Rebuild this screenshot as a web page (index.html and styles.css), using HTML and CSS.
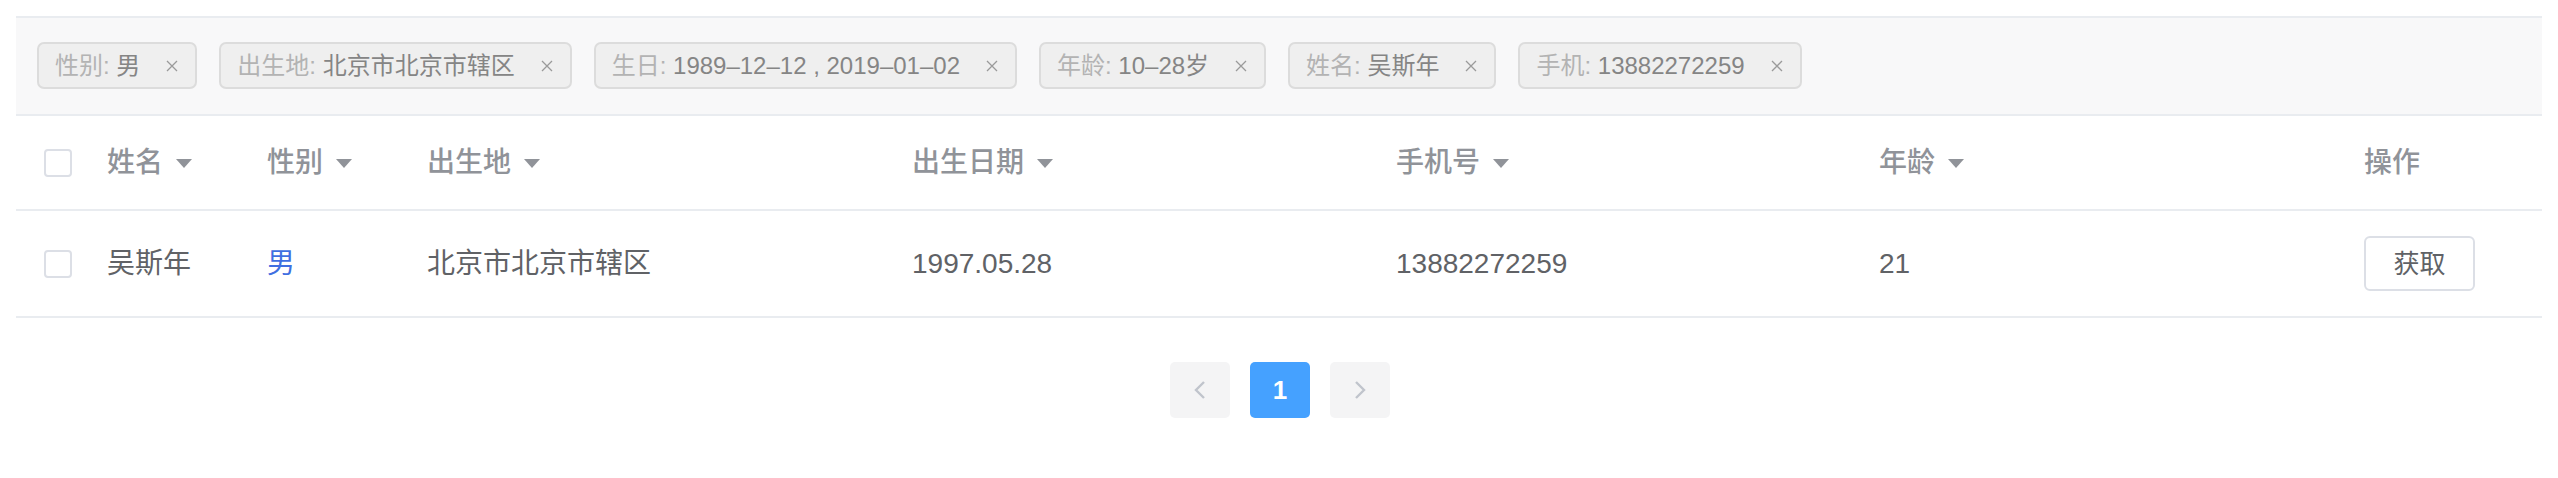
FILE: index.html
```html
<!DOCTYPE html>
<html lang="zh-CN">
<head>
<meta charset="utf-8">
<title>筛选表格</title>
<link rel="stylesheet" href="styles.css">
</head>
<body>
<div class="page">
  <div class="filter-bar">
    <span class="tag"><span class="tag-label">性别: </span><span class="tag-value">男</span><svg class="tag-close" viewBox="0 0 12 12"><path d="M1 1L11 11M11 1L1 11"/></svg></span>
    <span class="tag"><span class="tag-label">出生地: </span><span class="tag-value">北京市北京市辖区</span><svg class="tag-close" viewBox="0 0 12 12"><path d="M1 1L11 11M11 1L1 11"/></svg></span>
    <span class="tag"><span class="tag-label">生日: </span><span class="tag-value">1989–12–12 , 2019–01–02</span><svg class="tag-close" viewBox="0 0 12 12"><path d="M1 1L11 11M11 1L1 11"/></svg></span>
    <span class="tag"><span class="tag-label">年龄: </span><span class="tag-value">10–28岁</span><svg class="tag-close" viewBox="0 0 12 12"><path d="M1 1L11 11M11 1L1 11"/></svg></span>
    <span class="tag"><span class="tag-label">姓名: </span><span class="tag-value">吴斯年</span><svg class="tag-close" viewBox="0 0 12 12"><path d="M1 1L11 11M11 1L1 11"/></svg></span>
    <span class="tag"><span class="tag-label">手机: </span><span class="tag-value">13882272259</span><svg class="tag-close" viewBox="0 0 12 12"><path d="M1 1L11 11M11 1L1 11"/></svg></span>
  </div>

  <div class="table">
    <div class="row head">
      <div class="cell"><span class="checkbox"></span></div>
      <div class="cell">姓名<i class="sort"></i></div>
      <div class="cell">性别<i class="sort"></i></div>
      <div class="cell">出生地<i class="sort"></i></div>
      <div class="cell">出生日期<i class="sort"></i></div>
      <div class="cell">手机号<i class="sort"></i></div>
      <div class="cell">年龄<i class="sort"></i></div>
      <div class="cell">操作</div>
    </div>
    <div class="row body">
      <div class="cell"><span class="checkbox"></span></div>
      <div class="cell">吴斯年</div>
      <div class="cell male">男</div>
      <div class="cell">北京市北京市辖区</div>
      <div class="cell">1997.05.28</div>
      <div class="cell">13882272259</div>
      <div class="cell">21</div>
      <div class="cell"><button class="btn">获取</button></div>
    </div>
  </div>

  <div class="pager">
    <span class="pg-btn"><svg viewBox="0 0 12 20"><path d="M10 2L2 10L10 18"/></svg></span>
    <span class="pg-btn active">1</span>
    <span class="pg-btn"><svg viewBox="0 0 12 20"><path d="M2 2L10 10L2 18"/></svg></span>
  </div>
</div>
</body>
</html>
```
FILE: styles.css
```css
html, body {
  margin: 0;
  padding: 0;
  background: #ffffff;
}

body {
  font-family: "Liberation Sans", "Noto Sans CJK SC", sans-serif;
  color: #606266;
}

.page {
  padding: 16px;
}

.filter-bar {
  display: flex;
  flex-wrap: wrap;
  gap: 22px;
  padding: 24px 21px 25px;
  background: #f8f8f9;
  border-top: 2px solid #e9ecf0;
  border-bottom: 2px solid #e9ecf0;
}

.tag {
  box-sizing: border-box;
  height: 47px;
  display: inline-flex;
  align-items: center;
  padding: 0 17px 0 16px;
  border: 2px solid #dcdcdc;
  border-radius: 7px;
  background: #efefef;
  font-size: 24px;
  line-height: 1;
  white-space: pre;
}

.tag-label {
  color: #b3b3b3;
}

.tag-value {
  color: #858585;
}

.tag-close {
  width: 12px;
  height: 12px;
  margin-left: 26px;
  fill: none;
  stroke: #9a9a9a;
  stroke-width: 1.3;
}

.table {
  display: flex;
  flex-direction: column;
}

.row {
  box-sizing: border-box;
  display: grid;
  grid-template-columns: 63px 160px 160px 485px 484px 483px 485px 206px;
  border-bottom: 2px solid #e9ecf0;
}

.row.head {
  height: 95px;
}

.row.body {
  height: 107px;
}

.cell {
  display: flex;
  align-items: center;
  padding-left: 28px;
  font-size: 28px;
  line-height: 1;
  white-space: nowrap;
}

.head .cell {
  color: #909399;
  font-weight: 500;
}

.body .cell {
  color: #606266;
}

.body .cell.male {
  color: #3f6fe1;
}

.checkbox {
  box-sizing: border-box;
  display: block;
  width: 28px;
  height: 28px;
  border: 2px solid #dcdfe6;
  border-radius: 4px;
  background: #fff;
}

.sort {
  display: block;
  width: 0;
  height: 0;
  margin-left: 13px;
  margin-top: 2px;
  border-left: 8px solid transparent;
  border-right: 8px solid transparent;
  border-top: 9px solid #909399;
}

.btn {
  box-sizing: border-box;
  width: 111px;
  height: 55px;
  border: 2px solid #dcdfe6;
  border-radius: 6px;
  background: #fff;
  color: #606266;
  font-family: "Liberation Sans", "Noto Sans CJK SC", sans-serif;
  font-size: 26px;
  padding: 0;
  line-height: 1;
}

.pager {
  display: flex;
  justify-content: center;
  gap: 20px;
  margin-top: 44px;
  padding-left: 2px;
}

.pg-btn {
  width: 60px;
  height: 56px;
  border-radius: 5px;
  background: #f4f4f5;
  display: flex;
  align-items: center;
  justify-content: center;
  font-size: 26px;
  font-weight: bold;
  color: #606266;
}

.pg-btn svg {
  width: 12px;
  height: 20px;
  fill: none;
  stroke: #c0c4cc;
  stroke-width: 2.4;
}

.pg-btn.active {
  background: #45a1ff;
  color: #ffffff;
}
```
